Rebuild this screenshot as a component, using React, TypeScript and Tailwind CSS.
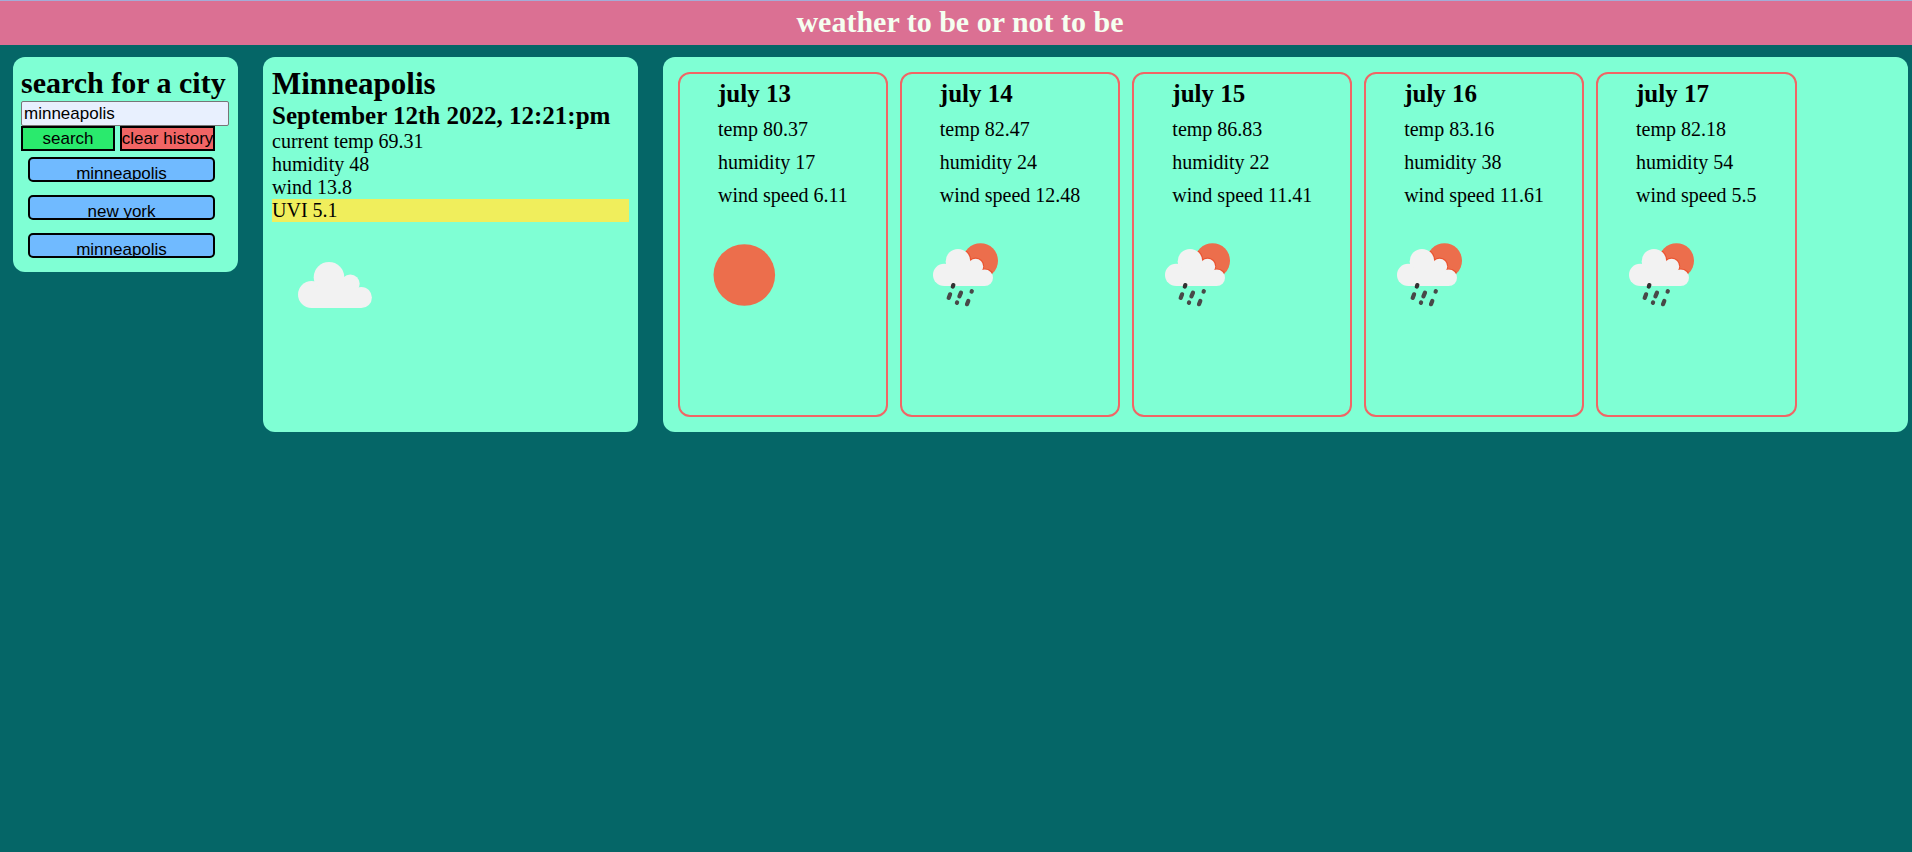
import { useState } from "react";

type Icon = "sun" | "rain";

interface Day {
  date: string;
  temp: string;
  humidity: string;
  wind: string;
  icon: Icon;
}

const days: Day[] = [
  { date: "july 13", temp: "80.37", humidity: "17", wind: "6.11", icon: "sun" },
  { date: "july 14", temp: "82.47", humidity: "24", wind: "12.48", icon: "rain" },
  { date: "july 15", temp: "86.83", humidity: "22", wind: "11.41", icon: "rain" },
  { date: "july 16", temp: "83.16", humidity: "38", wind: "11.61", icon: "rain" },
  { date: "july 17", temp: "82.18", humidity: "54", wind: "5.5", icon: "rain" },
];

const searches = ["minneapolis", "new york", "minneapolis"];

function CloudIcon() {
  return (
    <svg viewBox="0 0 125 125" className="size-[125px]" role="img" aria-label="cloudy">
      <g fill="#f2f2f2">
        <circle cx="39.5" cy="72.5" r="13.5" />
        <circle cx="57" cy="55.3" r="15.3" />
        <circle cx="78.3" cy="61.8" r="9.4" />
        <circle cx="89.3" cy="75.5" r="10.6" />
        <path d="M39.5 86V68L50 60H80L89.3 72V86Z" />
      </g>
    </svg>
  );
}

function SunIcon() {
  return (
    <svg viewBox="0 0 125 125" className="size-[125px]" role="img" aria-label="sunny">
      <circle cx="64.3" cy="63" r="30.8" fill="#ec6e4c" />
    </svg>
  );
}

function RainIcon() {
  return (
    <svg viewBox="0 0 125 125" className="size-[125px]" role="img" aria-label="sun and rain">
      <defs>
        <clipPath id="sun-disc">
          <circle cx="78.5" cy="48.7" r="17.5" />
        </clipPath>
      </defs>
      <circle cx="78.5" cy="48.7" r="17.5" fill="#ec6e4c" />
      <g clipPath="url(#sun-disc)" fill="#ea5330">
        <circle cx="56" cy="49" r="13.3" />
        <circle cx="73.6" cy="54.2" r="8.6" />
        <circle cx="83.2" cy="65.8" r="9.3" />
      </g>
      <g fill="#f2f2f2">
        <circle cx="42.2" cy="62.9" r="11.2" />
        <circle cx="56" cy="49.2" r="12.3" />
        <circle cx="73.6" cy="54.4" r="7.6" />
        <circle cx="82.7" cy="65.8" r="8.3" />
        <path d="M42.2 74.1V58L50 54H74L82.7 63V74.1Z" />
      </g>
      <g stroke="#484848" strokeWidth="4.2" strokeLinecap="round">
        <path d="M51.3 73.1L50.8 74.6" stroke="#333333" />
        <path d="M48.1 82.3L46.7 85.9" />
        <path d="M59 80.6L57.4 84.4" />
        <path d="M69.8 79.2L69.6 79.6" />
        <path d="M55.1 90.4L54.9 90.8" />
        <path d="M66.3 89L65 92.2" />
      </g>
    </svg>
  );
}

function DayCard({ day }: { day: Day }) {
  return (
    <article className="min-h-[345px] rounded-[12px] border-2 border-[#f16565] pt-[5px]">
      <div className="px-[38px]">
        <h2 className="mb-[5px] text-[25px] leading-[29px] font-bold">{day.date}</h2>
        <p className="leading-[33px]">temp {day.temp}</p>
        <p className="leading-[33px]">humidity {day.humidity}</p>
        <p className="leading-[33px]">wind speed {day.wind}</p>
      </div>
      {day.icon === "sun" ? <SunIcon /> : <RainIcon />}
    </article>
  );
}

export default function App() {
  const [city, setCity] = useState("minneapolis");
  const [history, setHistory] = useState(searches);

  return (
    <div className="min-h-screen bg-[#056667] font-['Liberation_Serif','Times_New_Roman',serif] text-[20px] leading-[23px] text-black">
      <header className="border-t border-[#a3add8] bg-[#db7093] pt-1 pb-[6px] pl-2 text-center">
        <h1 className="text-[30px] leading-[34px] font-bold text-[#f5fff0]">weather to be or not to be</h1>
      </header>
      <main className="flex items-start gap-[25px] pt-3 pr-1 pl-[13px]">
        <section className="w-[225px] shrink-0 rounded-[12px] bg-[#7fffd4] pt-[9px] pr-[9px] pb-[14px] pl-2">
          <form
            onSubmit={(e) => {
              e.preventDefault();
              if (city.trim()) setHistory([...history, city.trim()]);
            }}
          >
            <label htmlFor="city" className="block pb-[2px] text-[30px] leading-[33px] font-bold whitespace-nowrap">
              search for a city
            </label>
            <input
              id="city"
              type="text"
              value={city}
              onChange={(e) => setCity(e.target.value)}
              className="block h-[25px] w-full rounded-[2px] border border-[#767676] bg-[#e8f0fe] px-[2px] font-['Liberation_Sans',Arial,sans-serif] text-[17px] leading-[20px]"
            />
            <div className="mr-[14px] flex gap-[5px] font-['Liberation_Sans',Arial,sans-serif] text-[17px] leading-[20px]">
              <button type="submit" className="h-[25px] flex-1 border-2 border-black bg-[#2aea6d]">
                search
              </button>
              <button
                type="button"
                onClick={() => setHistory([])}
                className="flex h-[25px] w-[95px] items-center justify-center border-2 border-black bg-[#f16565] whitespace-nowrap"
              >
                clear history
              </button>
            </div>
          </form>
          <div className="mt-[6px] mr-[14px] ml-[7px] flex flex-col gap-[13px]">
            {history.map((name, i) => (
              <button
                key={i}
                type="button"
                onClick={() => setCity(name)}
                className="flex h-[25px] items-start justify-center overflow-hidden rounded-[5px] border-2 border-black bg-[#70baff] pt-[5px] font-['Liberation_Sans',Arial,sans-serif] text-[17px] leading-[20px]"
              >
                {name}
              </button>
            ))}
          </div>
        </section>

        <section className="min-h-[375px] w-[375px] shrink-0 rounded-[12px] bg-[#7fffd4] p-[9px]">
          <h2 className="text-[31px] leading-[35px] font-bold">Minneapolis</h2>
          <h3 className="text-[25px] leading-[29px] font-bold whitespace-nowrap">September 12th 2022, 12:21:pm</h3>
          <p>current temp 69.31</p>
          <p>humidity 48</p>
          <p>wind 13.8</p>
          <p className="bg-[#f0ee5c]">UVI 5.1</p>
          <CloudIcon />
        </section>

        <section className="flex min-h-[375px] flex-1 gap-3 rounded-[12px] bg-[#7fffd4] p-[15px]">
          {days.map((day) => (
            <DayCard key={day.date} day={day} />
          ))}
        </section>
      </main>
    </div>
  );
}
